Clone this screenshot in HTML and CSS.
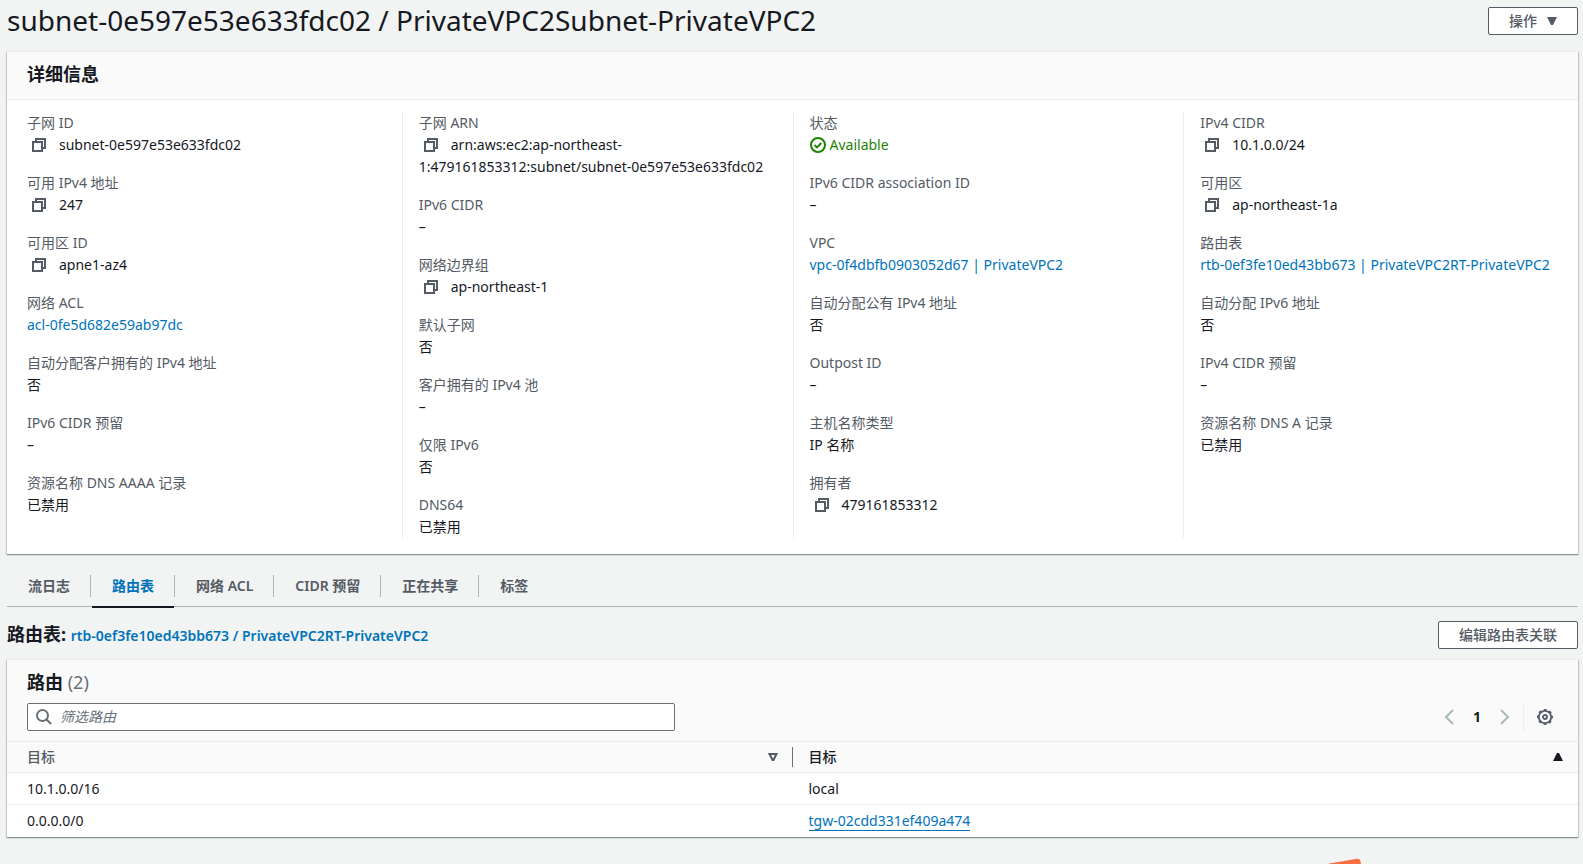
FILE: index.html
```html
<!DOCTYPE html>
<html lang="zh-CN">
<head>
<meta charset="utf-8">
<meta name="viewport" content="width=device-width, initial-scale=1">
<title>subnet-0e597e53e633fdc02 / PrivateVPC2Subnet-PrivateVPC2</title>
<link rel="stylesheet" href="styles.css">
</head>
<body>
<svg class="sprite" aria-hidden="true">
  <symbol id="copy" viewBox="0 0 16 16"><path d="M2 5h9v9H2zM5 5V2h9v9h-3" fill="none" stroke="currentColor" stroke-width="2"/></symbol>
</svg>
<main class="page">
  <header class="page-header">
    <h1 class="page-title">subnet-0e597e53e633fdc02 / PrivateVPC2Subnet-PrivateVPC2</h1>
    <button class="button" type="button">操作<svg class="caret" viewBox="0 0 10 8" aria-hidden="true"><path d="M0 0h10L6 8H4z" fill="currentColor"/></svg></button>
  </header>

  <section class="panel details">
    <div class="panel-header"><h2 class="heading">详细信息</h2></div>
    <div class="columns">
      <dl class="column">
        <div><dt>子网 ID</dt><dd><button class="copy" type="button" aria-label="复制"><svg><use href="#copy"/></svg></button>subnet-0e597e53e633fdc02</dd></div>
        <div><dt>可用 IPv4 地址</dt><dd><button class="copy" type="button" aria-label="复制"><svg><use href="#copy"/></svg></button>247</dd></div>
        <div><dt>可用区 ID</dt><dd><button class="copy" type="button" aria-label="复制"><svg><use href="#copy"/></svg></button>apne1-az4</dd></div>
        <div><dt>网络 ACL</dt><dd><a href="#">acl-0fe5d682e59ab97dc</a></dd></div>
        <div><dt>自动分配客户拥有的 IPv4 地址</dt><dd>否</dd></div>
        <div><dt>IPv6 CIDR 预留</dt><dd>–</dd></div>
        <div><dt>资源名称 DNS AAAA 记录</dt><dd>已禁用</dd></div>
      </dl>
      <dl class="column">
        <div><dt>子网 ARN</dt><dd><button class="copy" type="button" aria-label="复制"><svg><use href="#copy"/></svg></button>arn:aws:ec2:ap-northeast-<br>1:479161853312:subnet/subnet-0e597e53e633fdc02</dd></div>
        <div><dt>IPv6 CIDR</dt><dd>–</dd></div>
        <div><dt>网络边界组</dt><dd><button class="copy" type="button" aria-label="复制"><svg><use href="#copy"/></svg></button>ap-northeast-1</dd></div>
        <div><dt>默认子网</dt><dd>否</dd></div>
        <div><dt>客户拥有的 IPv4 池</dt><dd>–</dd></div>
        <div><dt>仅限 IPv6</dt><dd>否</dd></div>
        <div><dt>DNS64</dt><dd>已禁用</dd></div>
      </dl>
      <dl class="column">
        <div><dt>状态</dt><dd class="status"><svg viewBox="0 0 16 16" aria-hidden="true"><circle cx="8" cy="8" r="7" fill="none" stroke="currentColor" stroke-width="2"/><path d="M4.500 8l2.500 2.400L11.300 6" fill="none" stroke="currentColor" stroke-width="2"/></svg>Available</dd></div>
        <div><dt>IPv6 CIDR association ID</dt><dd>–</dd></div>
        <div><dt>VPC</dt><dd><a href="#">vpc-0f4dbfb0903052d67 | PrivateVPC2</a></dd></div>
        <div><dt>自动分配公有 IPv4 地址</dt><dd>否</dd></div>
        <div><dt>Outpost ID</dt><dd>–</dd></div>
        <div><dt>主机名称类型</dt><dd>IP 名称</dd></div>
        <div><dt>拥有者</dt><dd><button class="copy" type="button" aria-label="复制"><svg><use href="#copy"/></svg></button>479161853312</dd></div>
      </dl>
      <dl class="column">
        <div><dt>IPv4 CIDR</dt><dd><button class="copy" type="button" aria-label="复制"><svg><use href="#copy"/></svg></button>10.1.0.0/24</dd></div>
        <div><dt>可用区</dt><dd><button class="copy" type="button" aria-label="复制"><svg><use href="#copy"/></svg></button>ap-northeast-1a</dd></div>
        <div><dt>路由表</dt><dd><a href="#">rtb-0ef3fe10ed43bb673 | PrivateVPC2RT-PrivateVPC2</a></dd></div>
        <div><dt>自动分配 IPv6 地址</dt><dd>否</dd></div>
        <div><dt>IPv4 CIDR 预留</dt><dd>–</dd></div>
        <div><dt>资源名称 DNS A 记录</dt><dd>已禁用</dd></div>
      </dl>
    </div>
  </section>

  <nav class="tabs" role="tablist">
    <button class="tab" type="button" role="tab"><span>流日志</span></button>
    <button class="tab active" type="button" role="tab" aria-selected="true"><span>路由表</span></button>
    <button class="tab" type="button" role="tab"><span>网络 ACL</span></button>
    <button class="tab" type="button" role="tab"><span>CIDR 预留</span></button>
    <button class="tab" type="button" role="tab"><span>正在共享</span></button>
    <button class="tab" type="button" role="tab"><span>标签</span></button>
  </nav>

  <div class="route-header">
    <h2 class="heading">路由表: <a href="#">rtb-0ef3fe10ed43bb673 / PrivateVPC2RT-PrivateVPC2</a></h2>
    <button class="button" type="button">编辑路由表关联</button>
  </div>

  <section class="panel">
    <div class="routes-header">
      <h2 class="heading">路由 <span class="count">(2)</span></h2>
      <div class="tools">
        <label class="search">
          <svg viewBox="0 0 16 16" aria-hidden="true"><circle cx="6.500" cy="6.500" r="5.500" fill="none" stroke="currentColor" stroke-width="2"/><path d="M10.500 10.500l4.500 4.500" fill="none" stroke="currentColor" stroke-width="2"/></svg>
          <input type="text" placeholder="筛选路由" aria-label="筛选路由">
        </label>
        <div class="pager">
          <button class="icon-button" type="button" aria-label="上一页"><svg viewBox="0 0 16 16"><path d="M12 1L5 8l7 7" fill="none" stroke="currentColor" stroke-width="2"/></svg></button>
          <button class="page-number" type="button">1</button>
          <button class="icon-button" type="button" aria-label="下一页"><svg viewBox="0 0 16 16"><path d="M4 1l7 7-7 7" fill="none" stroke="currentColor" stroke-width="2"/></svg></button>
          <div class="settings"><button class="icon-button dark" type="button" aria-label="设置"><svg viewBox="0 0 16 16"><circle cx="8" cy="8" r="6.200" fill="none" stroke="currentColor" stroke-width="1.800"/><circle cx="8" cy="8" r="7.200" fill="none" stroke="currentColor" stroke-width="1.600" stroke-dasharray="2.827 2.827" stroke-dashoffset="1.413"/><circle cx="8" cy="8" r="2" fill="none" stroke="currentColor" stroke-width="1.800"/></svg></button></div>
        </div>
      </div>
    </div>
    <table class="routes">
      <thead>
        <tr>
          <th scope="col"><button class="sort" type="button">目标<svg viewBox="0 0 10 8" aria-hidden="true"><path d="M1.500 1h7L5.500 7h-1z" fill="none" stroke="currentColor" stroke-width="2"/></svg></button></th>
          <th scope="col" class="sorted" aria-sort="ascending"><button class="sort" type="button">目标<svg viewBox="0 0 10 8" aria-hidden="true"><path d="M0 8h10L6 0H4z" fill="currentColor"/></svg></button></th>
        </tr>
      </thead>
      <tbody>
        <tr><td>10.1.0.0/16</td><td>local</td></tr>
        <tr><td>0.0.0.0/0</td><td><a class="underlined" href="#">tgw-02cdd331ef409a474</a></td></tr>
      </tbody>
    </table>
  </section>
</main>
<div class="corner-mark" aria-hidden="true"></div>
</body>
</html>
```
FILE: styles.css
```css
* { box-sizing: border-box; }

body {
  margin: 0;
  min-height: 100vh;
  position: relative;
  overflow: hidden;
  background: #f2f3f3;
  color: #16191f;
  font: 14px/22px "Noto Sans", "Noto Sans CJK SC", sans-serif;
}

h1, h2, dl, dd { margin: 0; }
button, input { font: inherit; color: inherit; }
button { padding: 0; border: 0; background: none; cursor: pointer; }
a { color: #0073bb; text-decoration: none; }
svg { display: block; }
.sprite { display: none; }

.page { padding: 0 5px 0 7px; }

.page-header,
.route-header {
  display: flex;
  align-items: center;
  justify-content: space-between;
}
.page-header { align-items: flex-start; height: 51px; padding-top: 7px; }
.page-title { font-size: 28px; line-height: 26px; font-weight: 400; }
.heading { font-size: 18px; line-height: 22px; font-weight: 700; }

.button {
  display: flex;
  align-items: center;
  gap: 10px;
  height: 28px;
  padding: 0 20px;
  border: 1px solid #545b64;
  border-radius: 2px;
  background: #fff;
  color: #545b64;
  font-weight: 500;
}
.caret { width: 10px; height: 8px; }

.panel {
  border-top: 1px solid #eaeded;
  background: #fff;
  box-shadow: 0 1px 0 0 #879596, 0 1px 1px 0 rgba(0, 28, 36, .3), 1px 1px 1px 0 rgba(0, 28, 36, .15), -1px 1px 1px 0 rgba(0, 28, 36, .15);
}
.panel-header {
  padding: 11px 20px 14px;
  border-bottom: 1px solid #eaeded;
  background: #fafafa;
}

.columns {
  display: grid;
  grid-template-columns: repeat(4, minmax(0, 1fr));
  padding: 12px 4px 16px;
}
.column {
  display: flex;
  flex-direction: column;
  gap: 16px;
  padding: 0 0 0 16px;
}
.column + .column { border-left: 1px solid #eaeded; }
dt { color: #545b64; }
.copy {
  width: 32px;
  padding-left: 4px;
  color: #545b64;
  vertical-align: top;
}
.copy svg { width: 16px; height: 22px; }
.status { display: flex; align-items: center; gap: 4px; color: #1d8102; }
.status svg { width: 16px; height: 16px; }

.tabs {
  display: flex;
  padding-top: 21px;
  border-bottom: 1px solid #aab7b8;
}
.tab { height: 31px; color: #545b64; font-weight: 600; }
.tab span { display: block; padding: 0 20px 0 21px; border-right: 1px solid #aab7b8; }
.tab::after { content: ""; display: block; height: 9px; }
.tab:last-child span { border-right: 0; }
.tab.active { color: #0073bb; }
.tab.active::after { margin: 0 1px; border-bottom: 2px solid #16191f; }

.route-header { padding: 14px 0 10px; }
.route-header a { font-size: 14px; font-weight: 600; }

.routes-header { padding: 11px 20px 10px; background: #fafafa; border-bottom: 1px solid #eaeded; }
.count { color: #687078; font-weight: 400; }
.tools {
  display: flex;
  align-items: center;
  justify-content: space-between;
  padding-top: 10px;
}
.search {
  display: flex;
  align-items: center;
  gap: 8px;
  width: 648px;
  height: 28px;
  padding: 0 8px;
  border: 1px solid #687078;
  border-radius: 2px;
  background: #fff;
  color: #687078;
}
.search svg { width: 16px; height: 16px; flex: none; }
.search input { flex: 1; min-width: 0; padding: 0; border: 0; outline: 0; background: none; }
.search input::placeholder { color: #687078; font-style: italic; opacity: 1; }

.pager { display: flex; align-items: center; padding-right: 5px; }
.icon-button { color: #aab7b8; }
.icon-button svg { width: 16px; height: 16px; }
.icon-button.dark { color: #545b64; }
.page-number { width: 40px; font-weight: 700; }
.settings {
  display: flex;
  align-items: center;
  height: 28px;
  margin-left: 10px;
  padding-left: 13px;
  border-left: 1px solid #eaeded;
}

.routes { width: 100%; table-layout: fixed; border-collapse: collapse; }
.routes th { padding: 4px 15px 4px 20px; background: #fafafa; }
.routes th + th, .routes td + td { padding-left: 16px; }
.routes td { padding: 5px 20px 4px; border-top: 1px solid #eaeded; }
.routes tbody tr:last-child td { padding-bottom: 5px; }
.sort {
  display: flex;
  align-items: center;
  justify-content: space-between;
  width: 100%;
  color: #545b64;
  font-weight: 500;
}
.sort svg { width: 10px; height: 8px; }
.sorted .sort { color: #16191f; }
.routes th:first-child {
  background: linear-gradient(#687078, #687078) right center / 1px 20px no-repeat #fafafa;
}
.underlined { border-bottom: 1px solid #0073bb; }

.corner-mark {
  position: absolute;
  left: 1328px;
  top: 861px;
  width: 34px;
  height: 20px;
  border-radius: 3px;
  background: #f87040;
  transform: rotate(-10deg);
}
```
